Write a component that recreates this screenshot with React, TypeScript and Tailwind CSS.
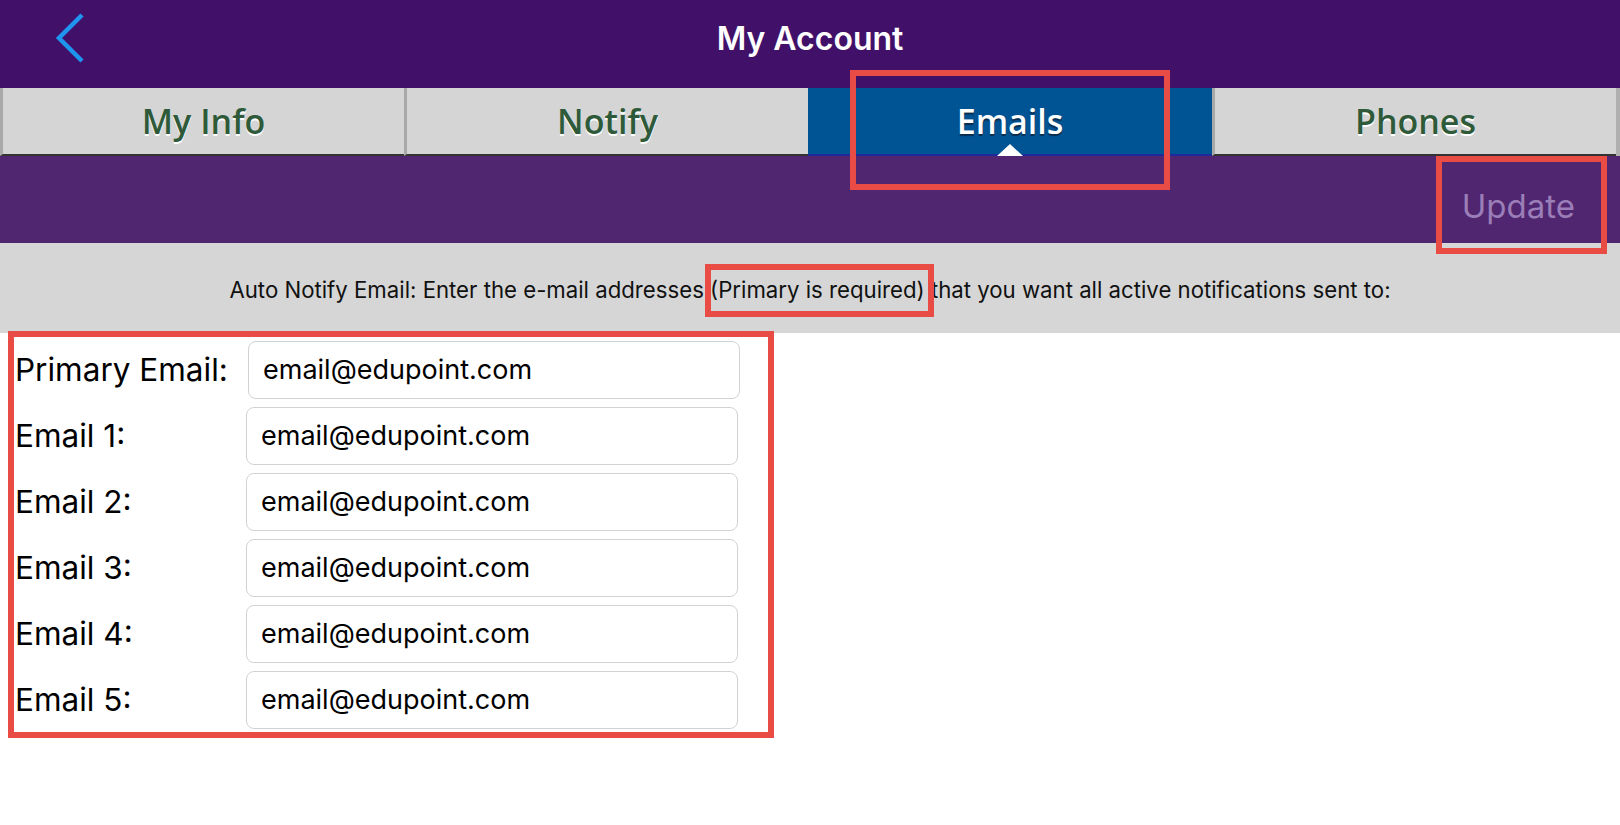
import React from 'react';

const TABS = ['My Info', 'Notify', 'Emails', 'Phones'];
const ACTIVE = 'Emails';

const FIELDS = ['Primary Email:', 'Email 1:', 'Email 2:', 'Email 3:', 'Email 4:', 'Email 5:'];

function BackChevron() {
  return (
    <svg width="34" height="54" viewBox="0 0 34 54" fill="none">
      <path d="M28 3 L5 26 L28 49" stroke="#1f95f0" strokeWidth="4.5" strokeLinecap="butt" strokeLinejoin="miter" />
    </svg>
  );
}

function Tab({ label }: { label: string }) {
  const active = label === ACTIVE;
  if (active) {
    return (
      <div className="relative h-[68px] bg-[#005494] border-b-2 border-[#1c2a9c] flex items-center justify-center">
        <span
          className="text-white text-[34px] font-semibold [text-shadow:0_2px_1px_#0b2d4d]"
          style={{ fontFamily: '"Open Sans", sans-serif' }}
        >
          {label}
        </span>
        <span className="absolute bottom-[-2px] left-1/2 -translate-x-1/2 w-0 h-0 border-l-[13px] border-r-[13px] border-b-[12px] border-l-transparent border-r-transparent border-b-white" />
      </div>
    );
  }
  return (
    <div className="h-[68px] bg-[#d5d5d5] border-b-2 border-[#333333] border-l-[3px] border-l-[#a9a9a9] flex items-center justify-center">
      <span
        className="text-[#2e5a3a] text-[34px] font-semibold [text-shadow:0_2px_0_#ffffff]"
        style={{ fontFamily: '"Open Sans", sans-serif' }}
      >
        {label}
      </span>
    </div>
  );
}

function EmailRow({ label, first }: { label: string; first: boolean }) {
  return (
    <div className="flex items-center h-[58px]">
      <div className={`${first ? 'w-[248px]' : 'w-[246px]'} pl-[15px] text-[31.5px] text-black`}>
        {label}
      </div>
      <div className="w-[492px] h-[58px] rounded-[8px] border border-[#d2d2d2] bg-white flex items-center pl-[14px] text-[27px] text-black">
        email@edupoint.com
      </div>
    </div>
  );
}

export default function App() {
  return (
    <div
      className="relative w-[1620px] h-[825px] bg-white overflow-hidden"
      style={{ fontFamily: 'Inter, "Liberation Sans", sans-serif' }}
    >
      {/* nav bar */}
      <div className="relative h-[88px] bg-[#41116a] flex items-center pb-[11px]">
        <div className="pl-[54px]">
          <BackChevron />
        </div>
        <div className="absolute inset-x-0 top-0 h-[77px] flex items-center justify-center">
          <span className="text-white text-[32px] font-semibold">My Account</span>
        </div>
      </div>

      {/* segmented tabs */}
      <div className="grid grid-cols-4 border-r-4 border-r-[#b0b0b0] bg-[#d5d5d5]">
        {TABS.map((t) => (
          <Tab key={t} label={t} />
        ))}
      </div>

      {/* toolbar */}
      <div className="h-[87px] bg-[#4f266f] flex items-center justify-end pr-[45px] pt-[14px]">
        <span className="text-[#9b7eb8] text-[33px]">Update</span>
      </div>

      {/* info */}
      <div className="h-[90px] bg-[#d6d6d6] flex items-center justify-center pt-1">
        <span className="text-[22.2px] text-[#111111]">
          Auto Notify Email: Enter the e-mail addresses (Primary is required) that you want all active notifications sent to:
        </span>
      </div>

      {/* form */}
      <div className="flex flex-col gap-[8px] pt-[8px]">
        {FIELDS.map((f, i) => (
          <EmailRow key={f} label={f} first={i === 0} />
        ))}
      </div>

      {/* red annotation boxes */}
      <div className="absolute left-[850px] top-[70px] w-[320px] h-[120px] border-[6px] border-[#e94b45]" />
      <div className="absolute left-[1436px] top-[156px] w-[171px] h-[98px] border-[6px] border-[#e94b45]" />
      <div className="absolute left-[705px] top-[264px] w-[229px] h-[53px] border-[6px] border-[#e94b45]" />
      <div className="absolute left-[8px] top-[331px] w-[766px] h-[407px] border-[6px] border-[#e94b45]" />
    </div>
  );
}
